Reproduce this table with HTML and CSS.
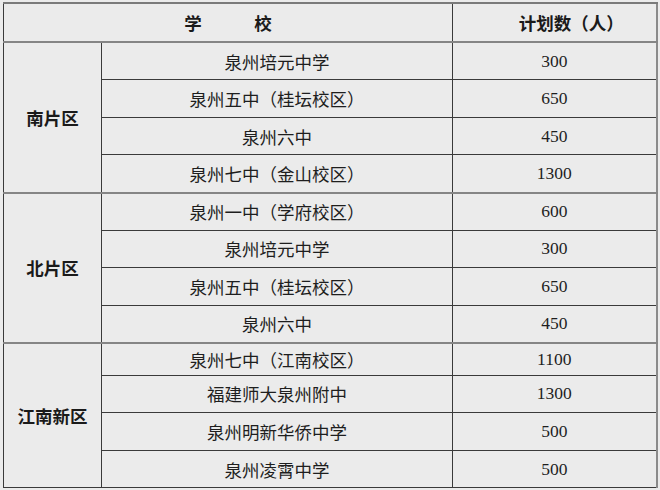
FILE: index.html
```html
<!DOCTYPE html>
<html lang="zh-CN">
<head>
<meta charset="utf-8">
<link rel="stylesheet" href="styles.css">
</head>
<body>
<table class="plan">
  <colgroup>
    <col class="c-region">
    <col class="c-school">
    <col class="c-num">
  </colgroup>
  <thead>
    <tr class="head">
      <th colspan="2" class="h-school">学&emsp;&emsp;&emsp;校</th>
      <th class="h-num">计划数（人）</th>
    </tr>
  </thead>
  <tbody class="group">
    <tr class="row"><td rowspan="4" class="region">南片区</td><td class="school">泉州培元中学</td><td class="num">300</td></tr>
    <tr class="row"><td class="school">泉州五中（桂坛校区）</td><td class="num">650</td></tr>
    <tr class="row"><td class="school">泉州六中</td><td class="num">450</td></tr>
    <tr class="row"><td class="school">泉州七中（金山校区）</td><td class="num">1300</td></tr>
  </tbody>
  <tbody class="group">
    <tr class="row"><td rowspan="4" class="region">北片区</td><td class="school">泉州一中（学府校区）</td><td class="num">600</td></tr>
    <tr class="row"><td class="school">泉州培元中学</td><td class="num">300</td></tr>
    <tr class="row"><td class="school">泉州五中（桂坛校区）</td><td class="num">650</td></tr>
    <tr class="row"><td class="school">泉州六中</td><td class="num">450</td></tr>
  </tbody>
  <tbody class="group">
    <tr class="row short"><td rowspan="4" class="region">江南新区</td><td class="school">泉州七中（江南校区）</td><td class="num">1100</td></tr>
    <tr class="row"><td class="school">福建师大泉州附中</td><td class="num">1300</td></tr>
    <tr class="row"><td class="school">泉州明新华侨中学</td><td class="num">500</td></tr>
    <tr class="row"><td class="school">泉州凌霄中学</td><td class="num">500</td></tr>
  </tbody>
</table>
</body>
</html>
```

FILE: styles.css
```css
html, body {
  margin: 0;
  padding: 0;
  background: #ebebeb;
}
body {
  padding: 2px 0 0 3px;
  font-family: "Noto Sans CJK SC", "Noto Sans", sans-serif;
  color: #1e1e1e;
}
.plan {
  border-collapse: collapse;
  width: 654px;
  table-layout: fixed;
  border-top: 2px solid #7a7a7a;
  border-right: 2px solid #8a8a8a;
  border-left: 1px solid #3a3a3a;
  border-bottom: 1px solid #3a3a3a;
}
.c-region { width: 98px; }
.c-school { width: 351px; }
.c-num { width: 204px; }
.plan th, .plan td {
  padding: 0;
  text-align: center;
  vertical-align: middle;
  border: 1px solid #3a3a3a;
  line-height: 1.2;
}
.head th {
  height: 37px;
  font-weight: 700;
  font-size: 17.5px;
  border-top: 2px solid #7a7a7a;
  color: #1a1a1a;
}
.plan .h-num { padding-left: 34px; }
.group { border-top: 2px solid #858585; }
.row { height: 37.64px; }
.row.short { height: 32px; }
.region {
  font-weight: 700;
  font-size: 17.5px;
  color: #1a1a1a;
}
.school {
  font-size: 17.5px;
  color: #1e1e1e;
}
.num {
  font-family: "Liberation Serif", "Times New Roman", serif;
  font-size: 17.5px;
  color: #1e1e1e;
}
```
